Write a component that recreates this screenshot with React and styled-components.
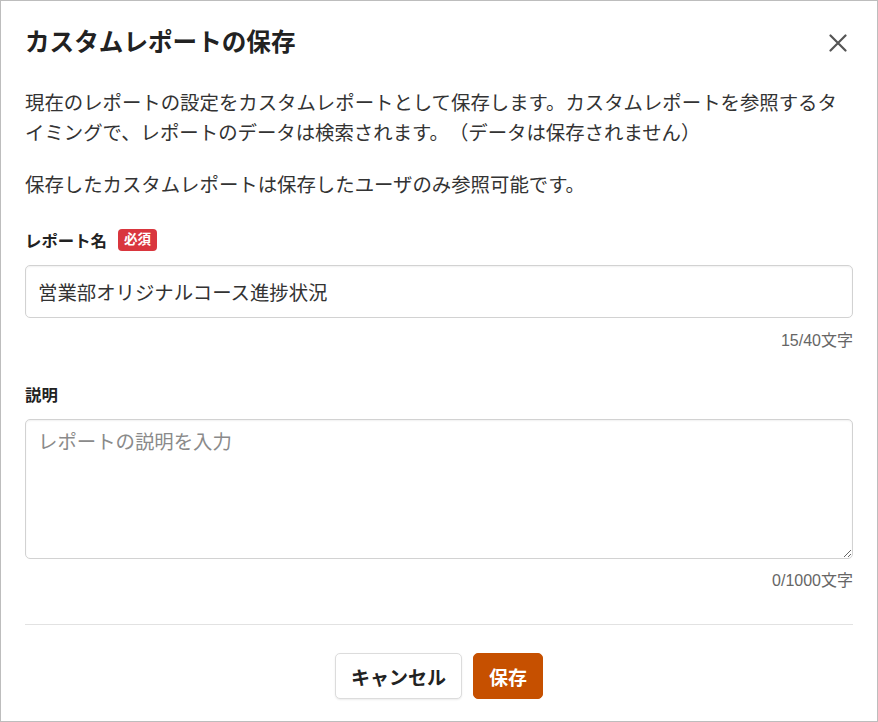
import React, { useState } from 'react';
import styled, { createGlobalStyle } from 'styled-components';

const GlobalStyle = createGlobalStyle`
  html, body {
    margin: 0;
    padding: 0;
    background: #ffffff;
  }
  * {
    box-sizing: border-box;
  }
`;

const fontStack = `"Liberation Sans", "Noto Sans CJK JP", sans-serif`;

const Dialog = styled.div`
  width: 878px;
  height: 722px;
  border: 1px solid #bdbdbd;
  padding: 24px 24px 21px;
  display: flex;
  flex-direction: column;
  font-family: ${fontStack};
  color: #333;
  background: #fff;
`;

const Header = styled.div`
  display: flex;
  align-items: center;
  justify-content: space-between;
  height: 36px;
`;

const Title = styled.h2`
  margin: 0;
  font-size: 24.6px;
  line-height: 36px;
  font-weight: 700;
  color: #222;
`;

const CloseButton = styled.button`
  width: 30px;
  height: 30px;
  padding: 0;
  border: none;
  background: none;
  display: flex;
  align-items: center;
  justify-content: center;
  cursor: pointer;
  color: #555;
`;

const Text = styled.p`
  margin: ${(p) => p.$top}px 0 0;
  font-size: 19.4px;
  line-height: 30px;
  color: #333;
  text-spacing-trim: space-all;
`;

const Field = styled.div`
  margin-top: ${(p) => p.$top}px;
  display: flex;
  flex-direction: column;
`;

const LabelRow = styled.div`
  display: flex;
  align-items: center;
  height: 24px;
`;

const Label = styled.label`
  font-size: 16.4px;
  font-weight: 700;
  color: #222;
`;

const Required = styled.span`
  margin-left: 11px;
  height: 22px;
  padding: 0 6px;
  border-radius: 4px;
  background: #d9363e;
  color: #fff;
  font-size: 13.5px;
  font-weight: 700;
  line-height: 22px;
`;

const Input = styled.input`
  margin-top: 13px;
  height: 53px;
  width: 100%;
  padding: 0 12px;
  border: 1px solid #d2d2d2;
  border-radius: 5px;
  box-shadow: inset 0 1px 2px rgba(0, 0, 0, 0.06);
  font-family: ${fontStack};
  font-size: 19.4px;
  color: #333;
  outline: none;
`;

const TextArea = styled.textarea`
  margin-top: 13px;
  height: 140px;
  width: 100%;
  padding: 7px 12px;
  border: 1px solid #d2d2d2;
  border-radius: 5px;
  box-shadow: inset 0 1px 2px rgba(0, 0, 0, 0.06);
  font-family: ${fontStack};
  font-size: 19.4px;
  line-height: 30px;
  color: #333;
  resize: vertical;
  outline: none;

  &::placeholder {
    color: #8a8a8a;
  }
`;

const Counter = styled.div`
  margin-top: ${(p) => p.$top}px;
  text-align: right;
  font-size: 16px;
  line-height: 24px;
  color: #666;
`;

const Divider = styled.hr`
  margin: 31px 0 0;
  border: none;
  border-top: 1px solid #e2e2e2;
`;

const Footer = styled.div`
  margin-top: 28px;
  display: flex;
  justify-content: center;
  gap: 11px;
`;

const Button = styled.button`
  height: 46px;
  padding: 0 15px;
  border-radius: 5px;
  font-family: ${fontStack};
  font-size: 19px;
  font-weight: 700;
  cursor: pointer;
  border: 1px solid ${(p) => (p.$primary ? '#c65000' : '#dcdcdc')};
  background: ${(p) => (p.$primary ? '#c65000' : '#ffffff')};
  color: ${(p) => (p.$primary ? '#ffffff' : '#222222')};
  box-shadow: ${(p) => (p.$primary ? 'none' : '0 1px 2px rgba(0, 0, 0, 0.08)')};
`;

const CloseIcon = () => (
  <svg width="18" height="18" viewBox="0 0 18 18" fill="none">
    <path d="M1.5 1.5L16.5 16.5M16.5 1.5L1.5 16.5" stroke="currentColor" strokeWidth="2.2" strokeLinecap="round" />
  </svg>
);

const App = () => {
  const [name, setName] = useState('営業部オリジナルコース進捗状況');
  const [description, setDescription] = useState('');

  return (
    <>
      <GlobalStyle />
      <Dialog>
        <Header>
          <Title>カスタムレポートの保存</Title>
          <CloseButton aria-label="閉じる">
            <CloseIcon />
          </CloseButton>
        </Header>

        <Text $top={27}>
          現在のレポートの設定をカスタムレポートとして保存します。カスタムレポートを参照するタイミングで、レポートのデータは検索されます。（データは保存されません）
        </Text>
        <Text $top={22}>保存したカスタムレポートは保存したユーザのみ参照可能です。</Text>

        <Field $top={28}>
          <LabelRow>
            <Label htmlFor="report-name">レポート名</Label>
            <Required>必須</Required>
          </LabelRow>
          <Input
            id="report-name"
            value={name}
            maxLength={40}
            onChange={(e) => setName(e.target.value)}
          />
          <Counter $top={11}>{name.length}/40文字</Counter>
        </Field>

        <Field $top={29}>
          <LabelRow>
            <Label htmlFor="report-desc">説明</Label>
          </LabelRow>
          <TextArea
            id="report-desc"
            placeholder="レポートの説明を入力"
            value={description}
            maxLength={1000}
            onChange={(e) => setDescription(e.target.value)}
          />
          <Counter $top={10}>{description.length}/1000文字</Counter>
        </Field>

        <Divider />

        <Footer>
          <Button>キャンセル</Button>
          <Button $primary>保存</Button>
        </Footer>
      </Dialog>
    </>
  );
};

export default App;
